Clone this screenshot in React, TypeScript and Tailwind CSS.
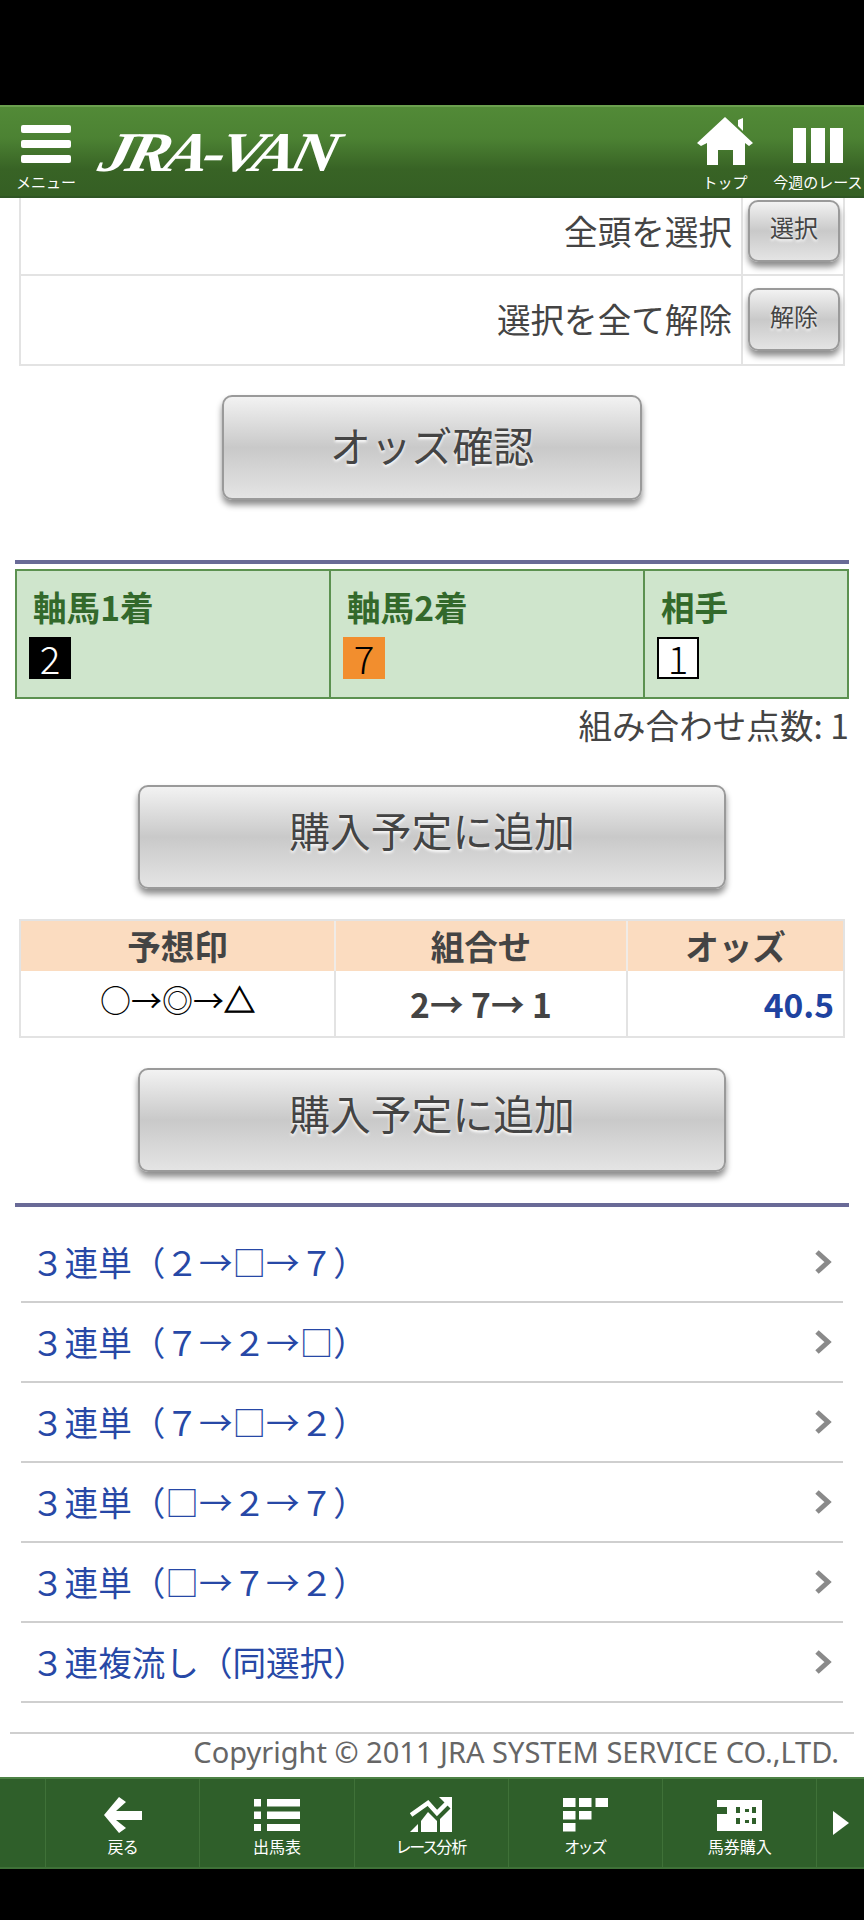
const font = '[font-family:"Noto_Sans_CJK_JP",sans-serif]';

function Btn3D({ label, className, text }: { label: string; className: string; text: string }) {
  return (
    <button className={`block rounded-[10px] border-2 border-[#9a9a9a] bg-[linear-gradient(#f2f2f2_0%,#c9c9c9_50%,#e4e4e4_100%)] text-[#444] shadow-[0_5px_6px_rgba(0,0,0,0.45)] [text-shadow:0_2px_3px_#fff] ${text} ${className}`}>
      {label}
    </button>
  );
}

function HeaderIconHome() {
  return (
    <svg width="56" height="48" viewBox="0 0 56 48" fill="#fff">
      <path d="M41 9 V3 L46 1 V14 Z" />
      <path d="M28 0 L56 26 L52 29 L48 26 V48 H36 V33 H21 V48 H10 V26 L4 29 L0 26 Z" />
    </svg>
  );
}

const links = [
  '３連単（２→□→７）',
  '３連単（７→２→□）',
  '３連単（７→□→２）',
  '３連単（□→２→７）',
  '３連単（□→７→２）',
  '３連複流し（同選択）',
];

const navItems: { label: string; labelClass?: string; icon: React.ReactNode }[] = [
  {
    label: '戻る',
    icon: (
      <svg width="38" height="36" viewBox="0 0 38 36" fill="#fff">
        <path d="M0 18 L15 0 L22 5 L12 14 H38 V23 H12 L22 31 L15 36 Z" />
      </svg>
    ),
  },
  {
    label: '出馬表',
    icon: (
      <svg width="46" height="32" viewBox="0 0 46 32" fill="#fff">
        <rect x="0" y="0" width="7" height="7.5" />
        <rect x="13" y="0" width="33" height="7.5" />
        <rect x="0" y="12.5" width="7" height="7.5" />
        <rect x="13" y="12.5" width="33" height="7.5" />
        <rect x="0" y="25" width="7" height="7" />
        <rect x="13" y="25" width="33" height="7" />
      </svg>
    ),
  },
  {
    label: 'レース分析',
    labelClass: 'tracking-[-1.2px]',
    icon: (
      <svg width="42" height="36" viewBox="0 0 42 36" fill="#fff">
        <polyline points="1,18 18,6 27,16 37,6" fill="none" stroke="#fff" strokeWidth="4.5" />
        <path d="M29 0 H42 V13 Z" />
        <path d="M0 35 L8 27 V35 Z" />
        <path d="M11 35 V24 L18 15 L27 24 V35 Z" />
        <path d="M30 35 V22 L42 10 V35 Z" />
      </svg>
    ),
  },
  {
    label: 'オッズ',
    icon: (
      <svg width="45" height="34" viewBox="0 0 45 34" fill="#fff">
        <rect x="0" y="0" width="12.5" height="9" />
        <rect x="16" y="0" width="12.5" height="9" />
        <rect x="32.5" y="0" width="12.5" height="9" />
        <rect x="0" y="13" width="12.5" height="8.5" />
        <rect x="16" y="13" width="12.5" height="8.5" />
        <rect x="0" y="25" width="12.5" height="8.5" />
      </svg>
    ),
  },
  {
    label: '馬券購入',
    icon: (
      <svg width="45" height="31" viewBox="0 0 45 31" fill="#fff">
        <path
          fillRule="evenodd"
          d="M0 0 H45 V31 H0 V14 H10 V7 H0 Z M19 7 H23 V13 H19 Z M28 9 H32 V12 H28 Z M35 7 H39 V13 H35 Z M19 18 H23 V24 H19 Z M28 20 H32 V23 H28 Z M35 18 H39 V24 H35 Z"
        />
      </svg>
    ),
  },
];

export default function App() {
  return (
    <div className={`flex h-[1920px] w-[864px] flex-col overflow-hidden bg-black ${font} text-[#444]`}>
      <div className="h-[105px] shrink-0" />

      {/* Header */}
      <header className="flex h-[93px] shrink-0 items-stretch border-t-2 border-b-2 border-t-[#6ba04f] border-b-[#2f5524] bg-[linear-gradient(#528a37_0%,#4c8233_35%,#386325_70%,#355f24_100%)] text-white">
        <div className="flex w-[92px] shrink-0 flex-col items-center pt-[18px]">
          <div className="flex w-[50px] flex-col gap-[7px]">
            <span className="h-[8px] rounded-[2px] bg-white" />
            <span className="h-[8px] rounded-[2px] bg-white" />
            <span className="h-[8px] rounded-[2px] bg-white" />
          </div>
          <span className="mt-[10px] text-[15px] leading-[18px]">メニュー</span>
        </div>
        <div className='mt-[10px] ml-[9px] h-[70px] w-[250px] origin-left scale-x-[1.18] -skew-x-[12deg] [font-family:"Liberation_Serif",serif] text-[56px] leading-[70px] font-bold tracking-[-5px] whitespace-nowrap italic'>
          JRA-VAN
        </div>
        <div className="ml-auto flex">
          <div className="flex w-[94px] flex-col items-center pt-[10px]">
            <HeaderIconHome />
            <span className="mt-[7px] text-[15px] leading-[20px]">トップ</span>
          </div>
          <div className="flex w-[92px] flex-col items-center pt-[21px]">
            <div className="flex gap-[5px]">
              <span className="h-[35px] w-[13.5px] bg-white" />
              <span className="h-[35px] w-[13.5px] bg-white" />
              <span className="h-[35px] w-[13.5px] bg-white" />
            </div>
            <span className="mt-[9px] text-[15px] leading-[20px] whitespace-nowrap">今週のレース</span>
          </div>
        </div>
      </header>

      {/* Content */}
      <main className="min-h-0 flex-1 bg-white">
        <div className="mx-[19px] border-x-2 border-b-2 border-[#e3e3e3]">
          <div className="flex h-[78px] border-b-2 border-[#e3e3e3]">
            <div className="flex flex-1 items-center justify-end pr-[9px] pb-[10px] text-[33.6px]">全頭を選択</div>
            <div className="w-[102px] border-l-2 border-[#e3e3e3] pl-[5px]">
              <Btn3D label="選択" text="text-[24px]" className="mt-[2px] h-[62px] w-[92px] pb-[8px]" />
            </div>
          </div>
          <div className="flex h-[88px]">
            <div className="flex flex-1 items-center justify-end pr-[9px] pb-[2px] text-[33.6px]">選択を全て解除</div>
            <div className="w-[102px] border-l-2 border-[#e3e3e3] pl-[5px]">
              <Btn3D label="解除" text="text-[24px]" className="mt-[12px] h-[63px] w-[92px] pb-[8px]" />
            </div>
          </div>
        </div>

        <Btn3D label="オッズ確認" text="text-[40.8px]" className="mx-auto mt-[29px] h-[105px] w-[420px] pb-[5px]" />

        <div className="mx-[15px] mt-[60px] h-[4px] bg-[#696a97]" />

        <div className="mx-[15px] mt-[5px] flex h-[130px] border-2 border-[#5c9150] bg-[#cfe5cc] text-[#33692b]">
          {[
            { t: '軸馬1着', n: '2', c: 'bg-black text-white' },
            { t: '軸馬2着', n: '7', c: 'bg-[#f28e2e] text-black' },
            { t: '相手', n: '1', c: 'bg-white text-black border-2 border-black' },
          ].map((col, i) => (
            <div
              key={col.t}
              className={`pt-[10px] pl-[12px] ${i === 0 ? 'w-[312px]' : i === 1 ? 'w-[314px] border-l-2 border-[#5c9150]' : 'flex-1 border-l-2 border-[#5c9150]'}`}
            >
              <div className="mb-[4px] pl-[4px] text-[33.6px] leading-[52px] font-bold">{col.t}</div>
              <div className={`flex h-[42px] w-[42px] items-center justify-center text-[38.4px] font-light ${col.c}`}>{col.n}</div>
            </div>
          ))}
        </div>

        <div className="mt-[1px] mr-[15px] text-right text-[33.6px] leading-[50px]">組み合わせ点数: 1</div>

        <Btn3D label="購入予定に追加" text="text-[40.8px]" className="mx-auto mt-[35px] h-[104px] w-[588px] pb-[14px]" />

        <div className="mx-[19px] mt-[30px] border-2 border-[#e3e3e3]">
          <div className="flex h-[50px] bg-[#fbdcc0] text-center text-[33.6px] leading-[50px] font-bold">
            <div className="w-[315px] border-r-2 border-[#f0ebe6]">予想印</div>
            <div className="w-[292px] border-r-2 border-[#f0ebe6]">組合せ</div>
            <div className="flex-1">オッズ</div>
          </div>
          <div className="flex h-[65px] text-[33.6px] font-bold">
            <div className="w-[315px] border-r-2 border-[#e3e3e3] pb-[10px] text-center text-[31px] leading-[55px] font-normal text-black">
              ○→◎→<span className="[-webkit-text-stroke:1px_black]">△</span>
            </div>
            <div className="w-[292px] border-r-2 border-[#e3e3e3] text-center leading-[66px]">2→ 7→ 1</div>
            <div className="flex-1 pr-[9px] text-right leading-[66px] text-[#1f43a0]">40.5</div>
          </div>
        </div>

        <Btn3D label="購入予定に追加" text="text-[40.8px]" className="mx-auto mt-[30px] h-[104px] w-[588px] pb-[14px]" />

        <div className="mx-[15px] mt-[31px] h-[4px] bg-[#696a97]" />

        <ul className="mx-[21px] mt-[16px]">
          {links.map((l) => (
            <li key={l} className="flex h-[80px] items-center justify-between border-b-2 border-[#cfcfcf] pr-[11px] pl-[10px] text-[33.6px] text-[#2748a6]">
              <span>{l}</span>
              <svg width="18" height="26" viewBox="0 0 18 26" fill="none" stroke="#8a8a8a" strokeWidth="5">
                <path d="M3 3 L14 13 L3 23" />
              </svg>
            </li>
          ))}
        </ul>

        <div className="mx-[10px] mt-[29px] border-t-2 border-[#cfcfcf] pr-[15px] text-right [font-family:'Noto_Sans',sans-serif] text-[29px] leading-[36px] text-[#666]">
          Copyright © 2011 JRA SYSTEM SERVICE CO.,LTD.
        </div>
      </main>

      {/* Bottom nav */}
      <nav className="flex h-[92px] shrink-0 border-t-2 border-b-2 border-t-[#4d8245] border-b-[#3f7138] bg-[#2f5f2a] text-white">
        <div className="w-[45px] shrink-0" />
        {navItems.map((item) => (
          <div key={item.label} className="flex w-[154.3px] shrink-0 flex-col items-center border-l border-[#3f7138] pt-[17px]">
            <div className="flex h-[38px] items-center">{item.icon}</div>
            <span className={`text-[16px] leading-[24px] whitespace-nowrap [font-feature-settings:'palt'] ${item.labelClass ?? ''}`}>{item.label}</span>
          </div>
        ))}
        <div className="flex flex-1 items-center justify-center border-l border-[#3f7138]">
          <svg width="16" height="24" viewBox="0 0 16 24" fill="#fff">
            <path d="M0 0 L16 12 L0 24 Z" />
          </svg>
        </div>
      </nav>
      <div className="h-[51px] flex-none" />
    </div>
  );
}
